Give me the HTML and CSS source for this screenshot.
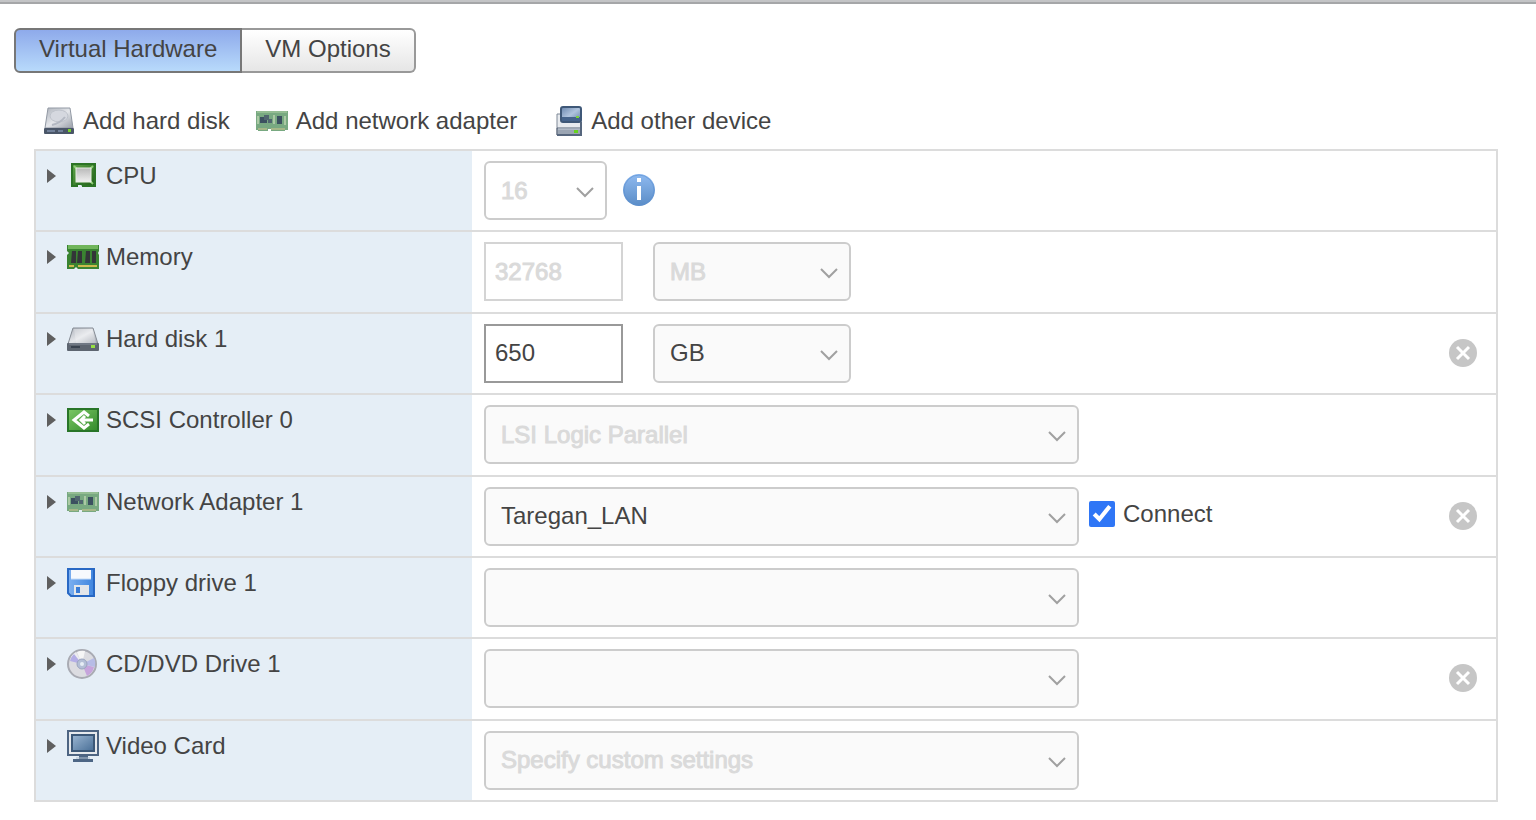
FILE: index.html
```html
<!doctype html>
<html lang="en">
<head>
<meta charset="utf-8">
<title>Edit Settings</title>
<meta name="viewport" content="width=device-width">
<link rel="stylesheet" href="styles.css">
</head>
<body>
<svg class="defs" width="0" height="0" aria-hidden="true">
<defs>
<linearGradient id="g-metal" x1="0" y1="0" x2="1" y2="1"><stop offset="0" stop-color="#aeb3bc"/><stop offset=".5" stop-color="#e4e6ea"/><stop offset="1" stop-color="#989ea8"/></linearGradient>
<linearGradient id="g-chip" x1="0" y1="0" x2="0" y2="1"><stop offset="0" stop-color="#b9b9b9"/><stop offset="1" stop-color="#f0f0f0"/></linearGradient>
<linearGradient id="g-green" x1="0" y1="0" x2="1" y2="1"><stop offset="0" stop-color="#62a84c"/><stop offset="1" stop-color="#1d5c14"/></linearGradient>
<linearGradient id="g-scsi" x1="0" y1="0" x2="1" y2="1"><stop offset="0" stop-color="#7cc865"/><stop offset="1" stop-color="#328a2b"/></linearGradient>
<linearGradient id="g-blue" x1="0" y1="0" x2="0" y2="1"><stop offset="0" stop-color="#8fbaf0"/><stop offset="1" stop-color="#5a8cc6"/></linearGradient>
<linearGradient id="g-floppy" x1="0" y1="0" x2="1" y2="0"><stop offset="0" stop-color="#7db0f0"/><stop offset="1" stop-color="#3f85df"/></linearGradient>
<linearGradient id="g-screen" x1="0" y1="0" x2="1" y2="1"><stop offset="0" stop-color="#9bb6d2"/><stop offset="1" stop-color="#486e96"/></linearGradient>
<linearGradient id="g-dev" x1="0" y1="0" x2="1" y2="1"><stop offset="0" stop-color="#6a86ad"/><stop offset=".5" stop-color="#b0c4de"/><stop offset="1" stop-color="#5c7aa2"/></linearGradient>
</defs>
<symbol id="i-adddisk" viewBox="0 0 32 32">
<path d="M5 3h22l3 20H2z" fill="url(#g-metal)" stroke="#9299a4"/>
<ellipse cx="16" cy="11" rx="9" ry="6" fill="#d5d8df" stroke="#bdc2ca"/>
<path d="M9 20c5-1 9-3 13-8" fill="none" stroke="#b3b8c2" stroke-width="2"/>
<rect x="1" y="23" width="30" height="6" rx="1" fill="#4a5668"/>
<path d="M4 26h8M15 26h5" stroke="#71819a" stroke-width="2"/><rect x="25" y="24" width="3" height="3" fill="#79d02e"/>
</symbol>
<symbol id="i-disk" viewBox="0 0 32 32">
<path d="M6 5h20l5 16H1z" fill="url(#g-metal)" stroke="#858b94"/>
<path d="M7 6h18l4 14H9z" fill="#fff" opacity=".25"/>
<rect x="0" y="20" width="32" height="8" rx="1" fill="#5d6570"/>
<path d="M2 21h28" stroke="#848c98"/><path d="M4 24h9" stroke="#39424f" stroke-width="2"/><rect x="24" y="22" width="4" height="3" fill="#96e044"/>
</symbol>
<symbol id="i-nic" viewBox="0 0 32 32">
<path d="M0 6h32v19h-3v1h-14v-2h-3v2H2v-1H0z" fill="#78a981"/>
<path d="M1 7h30" stroke="#94bd93" stroke-width="2"/>
<path d="M2 24h9M15 24h14" stroke="#a5b787" stroke-width="2"/>
<path d="M4 12h7v6H4zM21 11h5v8h-5z" fill="#3c5160"/>
<path d="M8 10h5v4h3v4h-4v-3H8z" fill="#50666f"/>
<path d="M18 10v9M29 11v9M2 11v8" stroke="#abc9a4" stroke-width="2"/>
</symbol>
<symbol id="i-device" viewBox="0 0 28 32">
<path d="M2 9h24v21H2z" fill="#e8ebef" stroke="#7f8997"/>
<path d="M2 23h24v7H2z" fill="#9ba5b3" stroke="#596577"/><path d="M3 24h22" stroke="#c7ced8"/>
<rect x="6" y="2" width="20" height="15" rx="2" fill="url(#g-dev)" stroke="#3f5878" stroke-width="2"/>
<path d="M7 12h18v4H7z" fill="#46648c"/>
<rect x="21" y="11" width="3" height="2" fill="#79d43c"/><rect x="19" y="25" width="4" height="3" fill="#65d11e"/>
<path d="M2 30h24V17" fill="none" stroke="#56667d" stroke-width="2"/>
</symbol>
<symbol id="i-cpu" viewBox="0 0 32 32">
<path d="M4 3h25v24H15v-2h-4v2H4z" fill="url(#g-green)"/>
<path d="M5 4h23v22H16l-1-2h-5v2H5z" fill="none" stroke="#2c7425" stroke-width="2"/>
<path d="M7 6l3 3M26 6l-3 3M26 24l-3-3" stroke="#8acb72" stroke-width="2"/>
<rect x="9" y="8" width="15" height="14" fill="url(#g-chip)" stroke="#e6eee2"/>
</symbol>
<symbol id="i-mem" viewBox="0 0 32 32">
<path d="M0 4h32v6l-1 2 1 2v14H11l-2-2-2 2H0V14l2-2-2-2z" fill="#3a8431"/>
<path d="M1 4h30v4H1z" fill="#70b55b"/>
<path d="M5 10h4v12H4zM11 10h4v12h-5zM19 10h4v12h-5zM25 10h4v12h-4z" fill="#333638"/>
<path d="M2 25h5M11 25h19" stroke="#ccb94d" stroke-width="2"/>
</symbol>
<symbol id="i-scsi" viewBox="0 0 32 32">
<rect x="1" y="5" width="30" height="22" fill="url(#g-scsi)" stroke="#287528" stroke-width="2"/>
<path d="M22 12l-5-4-10 8 10 8 5-4M26 16H14M18 12l-4 4 4 4" fill="none" stroke="#fff" stroke-width="3"/>
</symbol>
<symbol id="i-floppy" viewBox="0 0 32 32">
<path d="M1 2h26v27H4l-3-3z" fill="url(#g-floppy)" stroke="#2868c4" stroke-width="2"/>
<path d="M4 3h20v9H4z" fill="#f6f9fd"/><path d="M4 12h20" stroke="#c4dcf8"/>
<path d="M7 18h15v10H7z" fill="#e3e6ea"/><path d="M9 20h4v6H9z" fill="#397bd5"/>
</symbol>
<symbol id="i-cd" viewBox="0 0 32 32">
<circle cx="15" cy="16" r="14" fill="#dcdce1" stroke="#a9abb3" stroke-width="2"/>
<path d="M15 16L4 9a13 13 0 0 1 5-5z" fill="#ececf0"/>
<path d="M15 16L3 13a13 13 0 0 1 4-7z" fill="#b4aee6"/>
<path d="M15 16l12 3a13 13 0 0 1-7 9z" fill="#c6a4dc"/>
<path d="M15 16l12-6a13 13 0 0 1 1 9z" fill="#b7bce6"/>
<path d="M15 16L10 4a13 13 0 0 1 8-1z" fill="#f6f6f6"/>
<circle cx="15" cy="16" r="5" fill="#b4bfd6" stroke="#9aa4bf"/><circle cx="15" cy="16" r="2" fill="#e6eef5"/>
</symbol>
<symbol id="i-video" viewBox="0 0 32 32">
<rect x="1" y="1" width="30" height="24" fill="#e6e9ed" stroke="#4d6482" stroke-width="2"/>
<rect x="5" y="5" width="22" height="16" fill="url(#g-screen)" stroke="#3c5878" stroke-width="2"/>
<path d="M12 26h9v3h5v3H6v-3h6z" fill="#4d6685"/><path d="M9 28h14" stroke="#b2c0d0"/>
</symbol>
<symbol id="i-info" viewBox="0 0 32 32">
<circle cx="16" cy="16" r="16" fill="url(#g-blue)"/><circle cx="16" cy="16" r="15" fill="none" stroke="#5a90d2" opacity=".6"/>
<path d="M14 4h4v4h-4zM14 12h4v14h-4z" fill="#fff"/>
</symbol>
<symbol id="i-remove" viewBox="0 0 28 28">
<circle cx="14" cy="14" r="14" fill="#c6c6c6"/><path d="M8 8l12 12M20 8L8 20" stroke="#fff" stroke-width="3"/>
</symbol>
<symbol id="i-down" viewBox="0 0 18 12"><path d="M1 2l8 8 8-8" fill="none" stroke="currentColor" stroke-width="2"/></symbol>
<symbol id="i-arrow" viewBox="0 0 10 16"><path d="M1 1l9 7-9 7z" fill="#5f5f5f"/></symbol>
</svg>

<div class="tabs">
<button class="tab active" type="button">Virtual Hardware</button><button class="tab" type="button">VM Options</button>
</div>

<div class="toolbar">
<button type="button"><svg class="icon"><use href="#i-adddisk"/></svg>Add hard disk</button>
<button type="button"><svg class="icon"><use href="#i-nic"/></svg>Add network adapter</button>
<button type="button"><svg class="icon device"><use href="#i-device"/></svg>Add other device</button>
</div>

<form class="hardware">
<div class="row">
<div class="name"><svg class="arrow"><use href="#i-arrow"/></svg><svg class="icon"><use href="#i-cpu"/></svg><label for="cpu">CPU</label></div>
<div class="value">
<span class="select cpu"><select id="cpu" disabled><option>16</option></select><svg><use href="#i-down"/></svg></span>
<svg class="icon info"><use href="#i-info"/></svg>
</div>
</div>
<div class="row">
<div class="name"><svg class="arrow"><use href="#i-arrow"/></svg><svg class="icon"><use href="#i-mem"/></svg><label for="mem">Memory</label></div>
<div class="value">
<input class="num" id="mem" type="text" value="32768" disabled>
<span class="select unit"><select aria-label="Memory unit" disabled><option>MB</option></select><svg><use href="#i-down"/></svg></span>
</div>
</div>
<div class="row">
<div class="name"><svg class="arrow"><use href="#i-arrow"/></svg><svg class="icon"><use href="#i-disk"/></svg><label for="disk">Hard disk 1</label></div>
<div class="value">
<input class="num" id="disk" type="text" value="650">
<span class="select unit"><select aria-label="Disk unit"><option>GB</option></select><svg><use href="#i-down"/></svg></span>
<button class="remove" type="button" aria-label="Remove"><svg><use href="#i-remove"/></svg></button>
</div>
</div>
<div class="row">
<div class="name"><svg class="arrow"><use href="#i-arrow"/></svg><svg class="icon"><use href="#i-scsi"/></svg><label for="scsi">SCSI Controller 0</label></div>
<div class="value">
<span class="select wide"><select id="scsi" disabled><option>LSI Logic Parallel</option></select><svg><use href="#i-down"/></svg></span>
</div>
</div>
<div class="row">
<div class="name"><svg class="arrow"><use href="#i-arrow"/></svg><svg class="icon"><use href="#i-nic"/></svg><label for="nic">Network Adapter 1</label></div>
<div class="value">
<span class="select wide"><select id="nic"><option>Taregan_LAN</option></select><svg><use href="#i-down"/></svg></span>
<label class="check"><input type="checkbox" checked>Connect</label>
<button class="remove" type="button" aria-label="Remove"><svg><use href="#i-remove"/></svg></button>
</div>
</div>
<div class="row">
<div class="name"><svg class="arrow"><use href="#i-arrow"/></svg><svg class="icon"><use href="#i-floppy"/></svg><label for="floppy">Floppy drive 1</label></div>
<div class="value">
<span class="select wide"><select id="floppy"><option></option></select><svg><use href="#i-down"/></svg></span>
</div>
</div>
<div class="row">
<div class="name"><svg class="arrow"><use href="#i-arrow"/></svg><svg class="icon"><use href="#i-cd"/></svg><label for="cd">CD/DVD Drive 1</label></div>
<div class="value">
<span class="select wide"><select id="cd"><option></option></select><svg><use href="#i-down"/></svg></span>
<button class="remove" type="button" aria-label="Remove"><svg><use href="#i-remove"/></svg></button>
</div>
</div>
<div class="row">
<div class="name"><svg class="arrow"><use href="#i-arrow"/></svg><svg class="icon"><use href="#i-video"/></svg><label for="video">Video Card</label></div>
<div class="value">
<span class="select wide"><select id="video" disabled><option>Specify custom settings</option></select><svg><use href="#i-down"/></svg></span>
</div>
</div>
</form>
</body>
</html>
```

FILE: styles.css
```css
*, *::before {box-sizing:border-box}
body, button, input, select {margin:0; font:24px/28px "Liberation Sans",Arial,sans-serif; color:#444}
body {display:flex; flex-direction:column; min-height:100vh; background:#fff}
body::before {content:""; height:4px; background:#c3c4c6; border-bottom:2px solid #a5a6a8}
button {padding:0; border:0; background:none}
svg {display:block; flex:none}
.defs {position:absolute}
.icon {width:32px; height:32px}
.device {width:28px}

.tabs {display:flex; margin:24px 14px 0}
.tab {height:45px; padding:0 23px 3px; border:2px solid #999; border-left:0; border-radius:0 6px 6px 0; background:linear-gradient(#fff,#e6e6e6)}
.tab.active {border:2px solid #777; border-radius:6px 0 0 6px; background:linear-gradient(#8eaaeb,#b8dafb)}

.toolbar {display:flex; margin:30px 43px 10px; height:36px}
.toolbar button {display:flex; align-items:center; gap:8px; margin-right:26px}
.toolbar button:last-child {margin-left:12px}

.hardware {flex:1; display:flex; flex-direction:column; margin:0 38px 18px 34px; border:2px solid #dcdcdc; border-bottom:0}
.row {flex:1 0 81px; display:flex; border-bottom:2px solid #dcdcdc}
.name {width:436px; padding-top:9px; display:flex; align-items:flex-start; background:#e5eef6}
.name label {margin:2px 0 0 7px}
.arrow {width:10px; height:16px; margin:8px 11px 0 10px}
.value {flex:1; display:flex; align-items:flex-start; padding:10px 19px 0 12px}

.select {position:relative}
.select select {display:block; width:100%; height:59px; padding:0 40px 0 15px; border:2px solid #ccc; border-radius:6px; background:#fafafa; appearance:none; opacity:1}
.select svg {position:absolute; right:13px; top:25px; width:18px; height:12px; color:#a0a0a0; pointer-events:none}
.cpu {width:123px; margin-right:16px}
.select.cpu select {background:#fff}
.info {margin-top:13px}
.num {width:139px; height:59px; margin-right:30px; padding:0 9px; border:2px solid #999; background:#fff}
.num:disabled {border-color:#d4d4d4}
.unit {width:198px}
.wide {width:595px}
.num:disabled, select:disabled {color:#dadada; -webkit-text-stroke:1px #dadada}
.check {display:flex; align-items:center; gap:8px; margin:13px 0 0 10px}
.check input {width:26px; height:26px; margin:0; accent-color:#2f76f6}
.remove {margin:15px 0 0 auto}
.remove svg {width:28px; height:28px}
```
